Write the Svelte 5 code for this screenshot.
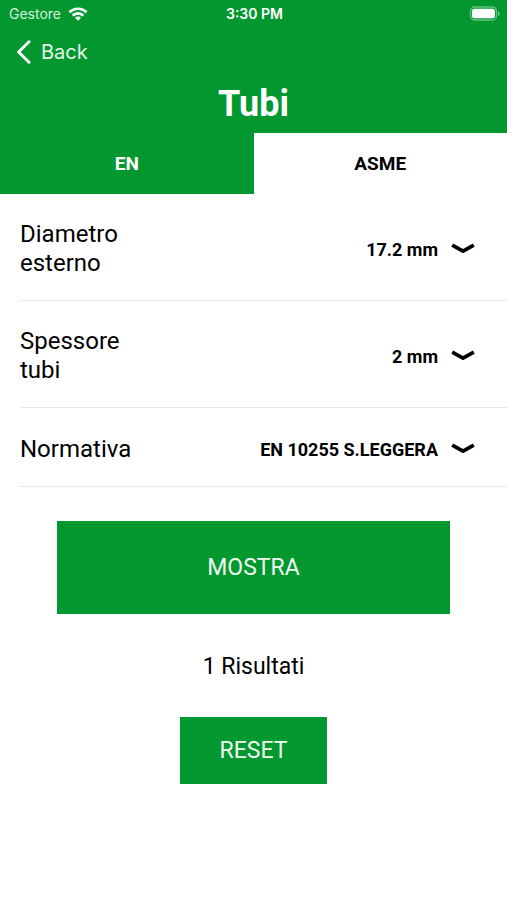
<script lang="ts">
  interface Field {
    id: string;
    label: string;
    value: string;
    options: string[];
  }

  const tabs = ['EN', 'ASME'];
  let activeTab = $state('EN');

  let fields = $state<Field[]>([
    { id: 'diametro', label: 'Diametro esterno', value: '17.2 mm', options: ['17.2 mm'] },
    { id: 'spessore', label: 'Spessore tubi', value: '2 mm', options: ['2 mm'] },
    { id: 'normativa', label: 'Normativa', value: 'EN 10255 S.LEGGERA', options: ['EN 10255 S.LEGGERA'] },
  ]);

  let results = $state(1);
</script>

<div class="screen">
  <header>
    <div class="status-bar">
      <span class="carrier">
        Gestore
        <svg width="20" height="14" viewBox="0 0 20 14" aria-hidden="true">
          <g fill="none" stroke="#fff" stroke-width="2.6">
            <path d="M1.4 5.2C6.2 .6 13.8 .6 18.6 5.2" />
            <path d="M4.6 8.5C7.6 5.6 12.4 5.6 15.4 8.5" />
          </g>
          <path d="M7 10.7C8.7 9.2 11.3 9.2 13 10.7L10 13.8z" fill="#fff" />
        </svg>
      </span>
      <time>3:30 PM</time>
      <svg class="battery" width="31" height="15" viewBox="0 0 31 15" aria-hidden="true">
        <rect x="1.5" y="1" width="26" height="13" rx="4" fill="none" stroke="#fff" stroke-opacity=".4" stroke-width="1.3" />
        <rect x="3" y="2.7" width="23" height="9.6" rx="2.5" fill="#fff" />
        <path d="M29 5.2c2 .8 2 3.8 0 4.6z" fill="#fff" fill-opacity=".5" />
      </svg>
    </div>
    <button class="back" type="button">
      <svg width="15" height="24" viewBox="0 0 15 24" aria-hidden="true">
        <path d="M13 1.8L2.6 12L13 22.2" fill="none" stroke="#fff" stroke-width="3" stroke-linecap="round" stroke-linejoin="round" />
      </svg>
      Back
    </button>
    <h1>Tubi</h1>
  </header>

  <div class="tabs" role="tablist">
    {#each tabs as tab}
      <button
        type="button"
        role="tab"
        class:active={activeTab === tab}
        aria-selected={activeTab === tab}
        onclick={() => (activeTab = tab)}
      >{tab}</button>
    {/each}
  </div>

  <form onsubmit={(e) => e.preventDefault()}>
    <div class="fields">
      {#each fields as field (field.id)}
        <div class="field">
          <label for={field.id}>{field.label}</label>
          <div class="picker">
            <select id={field.id} bind:value={field.value}>
              {#each field.options as option}
                <option value={option}>{option}</option>
              {/each}
            </select>
            <svg width="24" height="12" viewBox="0 0 24 12" aria-hidden="true">
              <path d="M1.2 2.2L12 8.2L22.8 2.2" fill="none" stroke="#000" stroke-width="3.8" stroke-linejoin="round" />
            </svg>
          </div>
        </div>
      {/each}
    </div>

    <div class="actions">
      <button class="show" type="submit">MOSTRA</button>
      <p>{results} Risultati</p>
      <button class="reset" type="button" onclick={() => (results = 0)}>RESET</button>
    </div>
  </form>
</div>

<style>
  :global(body) {
    margin: 0;
    background: #fff;
  }
  .screen {
    min-height: 100vh;
    background: #fff;
    color: #000;
    font-family: Roboto, sans-serif;
  }
  button,
  select {
    margin: 0;
    padding: 0;
    border: 0;
    border-radius: 0;
    font-family: inherit;
    cursor: pointer;
  }
  header {
    display: flex;
    flex-direction: column;
    align-items: flex-start;
    background: #02982f;
    color: #fff;
  }
  .status-bar {
    display: grid;
    grid-template-columns: 1fr auto 1fr;
    align-items: center;
    align-self: stretch;
    height: 27px;
    padding: 0 7px 0 9px;
    font-family: Inter, sans-serif;
    font-size: 14px;
  }
  .carrier {
    display: flex;
    align-items: center;
    gap: 7px;
    color: #d6f0dc;
  }
  time { font-weight: 600; }
  .battery { justify-self: end; }
  .back {
    display: flex;
    align-items: center;
    gap: 10px;
    height: 50px;
    padding: 0 16px;
    background: none;
    color: #e4f5e8;
    font-family: Inter, sans-serif;
    font-size: 20px;
  }
  h1 {
    align-self: stretch;
    margin: 0;
    padding: 3px 0 5px;
    font-size: 36px;
    font-weight: 700;
    line-height: 48px;
    text-align: center;
  }
  .tabs {
    display: flex;
    background: #02982f;
  }
  .tabs button {
    flex: 1;
    height: 61px;
    background: #fff;
    color: #000;
    font-size: 19px;
    font-weight: 700;
  }
  .tabs button.active {
    background: #02982f;
    color: #fff;
  }
  .fields { padding-left: 20px; }
  .field {
    display: flex;
    align-items: center;
    justify-content: space-between;
    padding: 26px 32px 22px 0;
    border-bottom: 1px solid #e8e8e8;
  }
  label {
    max-width: 140px;
    font-size: 24px;
    line-height: 29px;
  }
  .picker {
    display: flex;
    align-items: center;
    gap: 13px;
  }
  select {
    appearance: none;
    height: 30px;
    background: none;
    color: #000;
    font-size: 18px;
    font-weight: 700;
    text-align: right;
  }
  .actions {
    display: flex;
    flex-direction: column;
    align-items: center;
    padding: 34px 57px;
  }
  .actions button {
    background: #02982f;
    color: #f0faf2;
    font-size: 23px;
  }
  .show {
    width: 100%;
    height: 93px;
  }
  p {
    margin: 37px 0 35px;
    font-size: 23px;
    line-height: 31px;
  }
  .actions .reset {
    height: 67px;
    padding: 0 40px;
  }
</style>
